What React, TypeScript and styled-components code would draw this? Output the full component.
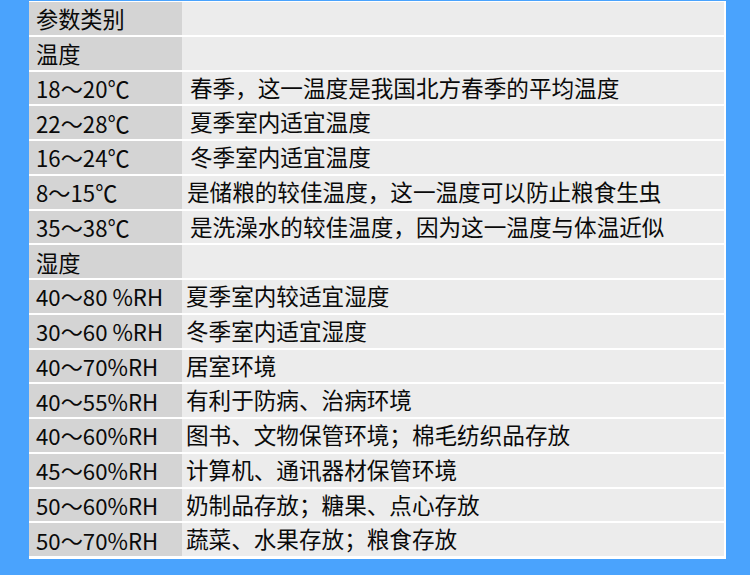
import React from "react";
import styled, { createGlobalStyle } from "styled-components";

const Global = createGlobalStyle`
  html, body { margin: 0; padding: 0; background: #4aa3fd; }
  body { font-family: "Noto Sans CJK SC", "Noto Sans", sans-serif; }
`;

const Page = styled.div`
  width: 750px;
  height: 575px;
  background: #4aa3fd;
  padding: 1px 0 0 29px;
  box-sizing: border-box;
`;

const Table = styled.div`
  width: 697px;
  background: #ffffff;
  padding: 1px 2px 3px 0;
  box-sizing: border-box;
  display: grid;
  grid-template-columns: 153px 1fr;
  grid-auto-rows: 32.75px;
  row-gap: 2px;
`;

const Cell = styled.div<{ $kind: "key" | "val"; $indent?: number }>`
  display: flex;
  align-items: center;
  background: ${(p) => (p.$kind === "key" ? "#d4d4d4" : "#ececec")};
  padding-left: ${(p) => (p.$kind === "key" ? 7 : p.$indent ?? 8)}px;
  font-size: ${(p) => (p.$kind === "key" ? 22.2 : 22.6)}px;
  color: #0a0a0a;
  white-space: nowrap;
  line-height: 1;
`;

type Row = { k: string; v: string; indent?: number };

const rows: Row[] = [
  { k: "参数类别", v: "" },
  { k: "温度", v: "" },
  { k: "18～20℃", v: "春季，这一温度是我国北方春季的平均温度" },
  { k: "22～28℃", v: "夏季室内适宜温度" },
  { k: "16～24℃", v: "冬季室内适宜温度" },
  { k: "8～15℃", v: "是储粮的较佳温度，这一温度可以防止粮食生虫", indent: 5 },
  { k: "35～38℃", v: "是洗澡水的较佳温度，因为这一温度与体温近似" },
  { k: "湿度", v: "" },
  { k: "40～80 %RH", v: "夏季室内较适宜湿度", indent: 4 },
  { k: "30～60 %RH", v: "冬季室内适宜湿度", indent: 4 },
  { k: "40～70%RH", v: "居室环境", indent: 4 },
  { k: "40～55%RH", v: "有利于防病、治病环境", indent: 4 },
  { k: "40～60%RH", v: "图书、文物保管环境；棉毛纺织品存放", indent: 4 },
  { k: "45～60%RH", v: "计算机、通讯器材保管环境", indent: 4 },
  { k: "50～60%RH", v: "奶制品存放；糖果、点心存放", indent: 4 },
  { k: "50～70%RH", v: "蔬菜、水果存放；粮食存放", indent: 4 },
];

export default function App() {
  return (
    <Page>
      <Global />
      <Table>
        {rows.map((r, i) => (
          <React.Fragment key={i}>
            <Cell $kind="key">{r.k}</Cell>
            <Cell $kind="val" $indent={r.indent}>{r.v}</Cell>
          </React.Fragment>
        ))}
      </Table>
    </Page>
  );
}
